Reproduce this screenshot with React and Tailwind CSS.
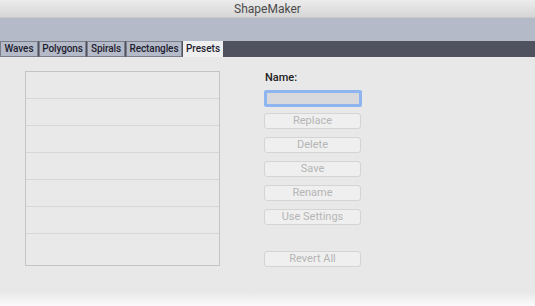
import React from "react";

const tabs = [
  { label: "Waves", w: "w-[38px]" },
  { label: "Polygons", w: "w-[47px]" },
  { label: "Spirals", w: "w-[38px]" },
  { label: "Rectangles", w: "w-[56px]" },
];

const buttons = ["Replace", "Delete", "Save", "Rename", "Use Settings"];

function Button({ label, className = "" }) {
  return (
    <div
      className={
        "h-[16px] w-[97px] rounded-[3px] border border-[#d4d4d4] bg-[#efefef] text-center text-[11px] leading-[14px] text-[#b5b5b5] " +
        className
      }
    >
      {label}
    </div>
  );
}

export default function App() {
  const rows = [0, 1, 2, 3, 4, 5];

  return (
    <div
      className="flex h-[306px] w-[535px] flex-col overflow-hidden bg-[#e8e8e8]"
      style={{ fontFamily: "Roboto, 'Liberation Sans', sans-serif" }}
    >
      {/* Title bar */}
      <div className="flex h-[18px] items-center justify-center border-b border-[#c9c9c9] bg-gradient-to-b from-[#ececec] to-[#d6d6d6] text-[12px] text-[#4b4b4b]">
        ShapeMaker
      </div>

      {/* Toolbar band */}
      <div className="h-[23px] bg-[#b5bac8]" />

      {/* Tabs */}
      <div className="flex h-[16px] items-stretch gap-[1px] bg-[#50535f]">
        {tabs.map((t) => (
          <div
            key={t.label}
            className={
              "border border-[#7b7f8b] bg-[#b5bac8] text-center text-[10px] font-medium leading-[13px] tracking-[-0.1px] text-[#1e2230] " +
              t.w
            }
          >
            {t.label}
          </div>
        ))}
        <div className="w-[40px] bg-[#efefef] text-center text-[10px] font-medium leading-[15px] text-[#1e2230]">
          Presets
        </div>
      </div>

      {/* Content */}
      <div className="flex flex-1 bg-[#e8e8e8]">
        <div className="ml-[25px] mt-[14px] flex h-[195px] w-[195px] flex-col border border-[#c4c4c4] bg-[#e9e9e9]">
          {rows.map((r) => (
            <div key={r} className="h-[27px] border-b border-[#d6d6d6]" />
          ))}
          <div className="flex-1" />
        </div>

        <div className="ml-[44px] mt-[14px] flex flex-col">
          <div className="pl-[1px] text-[11px] font-medium leading-[13px] text-[#222]">
            Name:
          </div>
          <div className="mt-[6px] h-[17px] w-[98px] rounded-[2px] border-[3px] border-[#8fb5f0] bg-[#d8d9dc]" />
          <div className="mt-[6px] flex flex-col gap-[8px]">
            {buttons.map((b) => (
              <Button key={b} label={b} />
            ))}
          </div>
          <Button label="Revert All" className="mt-[26px]" />
        </div>
      </div>

      {/* Bottom fade */}
      <div className="h-[14px] bg-gradient-to-b from-[#e8e8e8] to-[#fbfbfb]" />
    </div>
  );
}
